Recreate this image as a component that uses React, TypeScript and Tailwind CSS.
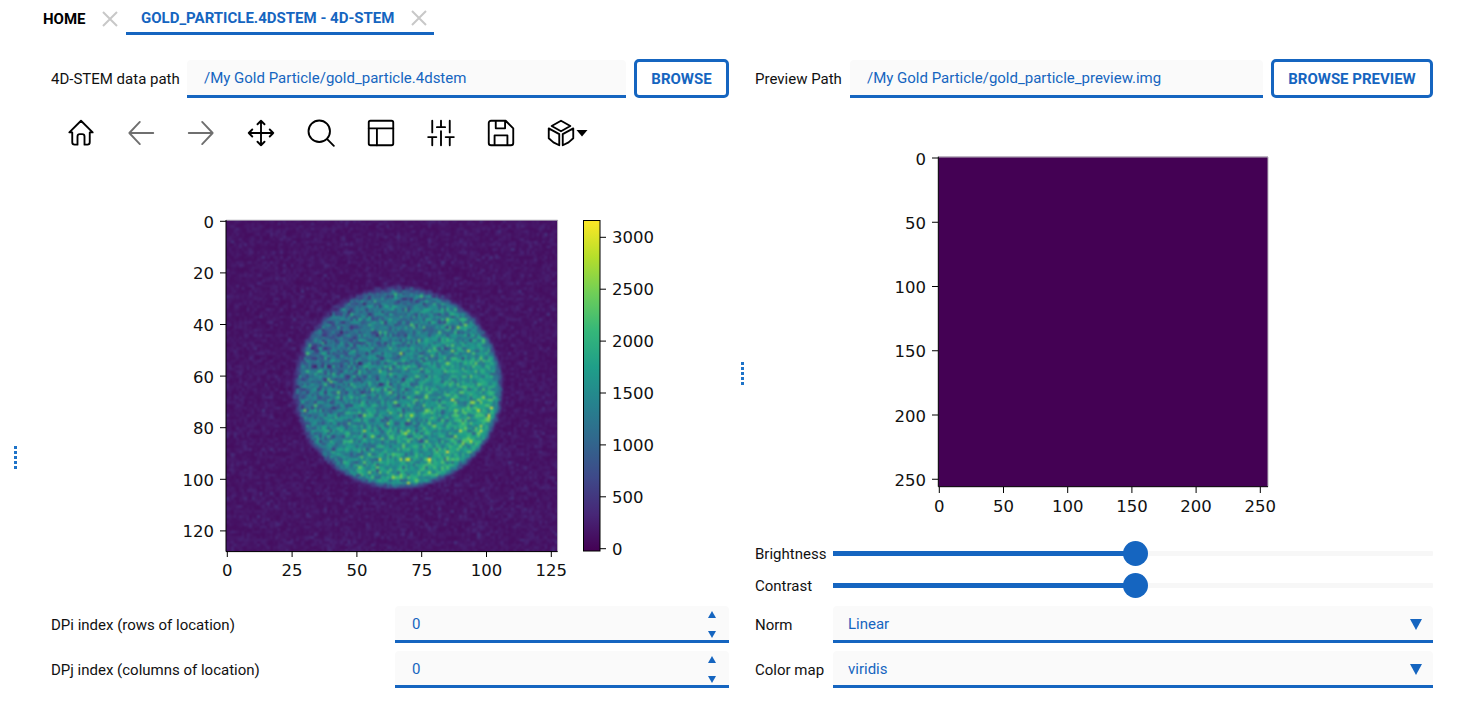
import React from "react";

const VIRIDIS = [
  [68, 1, 84], [71, 39, 119], [62, 73, 137], [49, 103, 141], [38, 130, 142],
  [31, 158, 137], [53, 183, 121], [110, 206, 88], [181, 222, 43], [253, 231, 37],
];

function viridis(t: number) {
  const c = Math.max(0, Math.min(0.9999, t)) * (VIRIDIS.length - 1);
  const i = Math.floor(c);
  const f = c - i;
  const a = VIRIDIS[i];
  const b = VIRIDIS[i + 1];
  return `rgb(${Math.round(a[0] + (b[0] - a[0]) * f)},${Math.round(a[1] + (b[1] - a[1]) * f)},${Math.round(a[2] + (b[2] - a[2]) * f)})`;
}

function makeHeat() {
  let s = 12345;
  const rnd = () => {
    s = (s * 1664525 + 1013904223) >>> 0;
    return s / 4294967296;
  };
  const gauss = () => (rnd() + rnd() + rnd() + rnd() - 2) * 1.73;
  const cells: { x: number; y: number; fill: string }[] = [];
  const cx = 65.9;
  const cy = 64.2;
  for (let y = 0; y < 128; y++) {
    for (let x = 0; x < 128; x++) {
      const dx = x - cx;
      const dy = (y - cy) * 1.03;
      const d = Math.sqrt(dx * dx + dy * dy);
      const edge = Math.max(0, Math.min(1, (39.3 - d) / 3 + 0.5));
      const grad = (dx * 0.8 + dy * 0.7) / 39;
      const mean = 1420 + 400 * grad;
      const spark = rnd() > 0.95 ? 350 + rnd() * (500 + 700 * Math.max(grad, 0)) : 0;
      const inside = mean + gauss() * 330 + spark;
      const outside = 100 + Math.abs(gauss()) * 100 + (rnd() > 0.96 ? 170 : 0);
      const v = inside * edge + outside * (1 - edge);
      cells.push({ x, y, fill: viridis(v / 3160) });
    }
  }
  return cells;
}

const HEAT = makeHeat();

const tick = "font-['DejaVu_Sans',sans-serif] text-[16.500px] fill-[#111111]";

function ParticlePlot() {
  const left = 226;
  const top = 220;
  const size = 331.6;
  const unit = size / 128;
  return (
    <svg viewBox="51 160 678 440" className="w-[678px] h-[440px] block">
      <defs>
        <linearGradient id="cb" x1="0" y1="1" x2="0" y2="0">
          {VIRIDIS.map((_, i) => (
            <stop key={i} offset={i / 9} stopColor={viridis(i / 9 + (i === 9 ? -0.0001 : 0))} />
          ))}
        </linearGradient>
        <filter id="soft" x="0" y="0" width="1" height="1" colorInterpolationFilters="sRGB">
          <feGaussianBlur stdDeviation="0.9" />
        </filter>
        <clipPath id="ax">
          <rect x={left} y={top} width={size} height={size} />
        </clipPath>
      </defs>
      <rect x={left} y={top} width={size} height={size} fill="#45116a" />
      <g clipPath="url(#ax)">
        <g filter="url(#soft)">
          {HEAT.map((c, i) => (
            <rect
              key={i}
              x={left + c.x * unit}
              y={top + c.y * unit}
              width={unit + 0.3}
              height={unit + 0.3}
              fill={c.fill}
              shapeRendering="crispEdges"
            />
          ))}
        </g>
      </g>
      <path d={`M${left} ${top + 0.2}H${left + size}V${top + size}`} fill="none" stroke="#b9b9bd" strokeWidth="1" />
      <path d={`M${left} ${top}V${top + size}H${left + size}`} fill="none" stroke="#000" strokeWidth="1" />
      {[0, 20, 40, 60, 80, 100, 120].map((v) => {
        const y = 221.3 + v * 2.58;
        return (
          <g key={v}>
            <line x1={220} x2={226} y1={y} y2={y} stroke="#000" />
            <text x={214} y={y + 6.5} textAnchor="end" className={tick}>{v}</text>
          </g>
        );
      })}
      {[0, 25, 50, 75, 100, 125].map((v) => {
        const x = 227.3 + v * 2.592;
        return (
          <g key={v}>
            <line x1={x} x2={x} y1={551} y2={557} stroke="#000" />
            <text x={x} y={576} textAnchor="middle" className={tick}>{v}</text>
          </g>
        );
      })}
      <rect x={583.5} y={220.5} width={16.5} height={330.5} fill="url(#cb)" stroke="#000" strokeWidth="1" />
      {[0, 500, 1000, 1500, 2000, 2500, 3000].map((v) => {
        const y = 548.7 - (v / 500) * 51.9;
        return (
          <g key={v}>
            <line x1={600} x2={606} y1={y} y2={y} stroke="#000" />
            <text x={612} y={y + 6} className={tick}>{v}</text>
          </g>
        );
      })}
    </svg>
  );
}

function PreviewPlot() {
  return (
    <svg viewBox="755 98 678 439" className="w-[678px] h-[439px] block">
      <rect x={938.3} y={156.7} width={329.7} height={330} fill="#440154" />
      <path d="M938.3 157H1268V486.7" fill="none" stroke="#b9b9bd" strokeWidth="1" />
      <path d="M938.3 156.7V486.7H1268" fill="none" stroke="#000" strokeWidth="1" />
      {[0, 50, 100, 150, 200, 250].map((v) => {
        const y = 158 + v * 1.285;
        return (
          <g key={v}>
            <line x1={932} x2={938} y1={y} y2={y} stroke="#000" />
            <text x={926} y={y + 6.5} textAnchor="end" className={tick}>{v}</text>
          </g>
        );
      })}
      {[0, 50, 100, 150, 200, 250].map((v) => {
        const x = 939.3 + v * 1.284;
        return (
          <g key={v}>
            <line x1={x} x2={x} y1={487} y2={493} stroke="#000" />
            <text x={x} y={512} textAnchor="middle" className={tick}>{v}</text>
          </g>
        );
      })}
    </svg>
  );
}

function Ico({ color = "#000", children }: { color?: string; children: React.ReactNode }) {
  return (
    <svg
      viewBox="0 0 24 24"
      className="w-[28px] h-[28px]"
      fill="none"
      stroke={color}
      strokeWidth="1.6"
      strokeLinecap="round"
      strokeLinejoin="round"
    >
      {children}
    </svg>
  );
}

function Toolbar() {
  const items = [
    <Ico key="h"><path d="M12 1.500 2 11.500h2.500v8.500a2 2 0 0 0 2 2h2.500v-7a2 2 0 0 1 2-2h2a2 2 0 0 1 2 2v7h2.500a2 2 0 0 0 2-2v-8.500h2.500z" /></Ico>,
    <Ico key="b" color="#6f6f6f"><path d="M22.500 12H2M2 12l9-9.500M2 12l9 9.500" /></Ico>,
    <Ico key="f" color="#6f6f6f"><path d="M1.500 12H22M22 12l-9-9.500M22 12l-9 9.500" /></Ico>,
    <Ico key="p"><path d="M1.500 12h21M12 1.500v21M4.500 9l-3 3 3 3M19.500 9l3 3-3 3M9 4.500l3-3 3 3M9 19.500l3 3 3-3" /></Ico>,
    <Ico key="z"><circle cx="10.500" cy="10.500" r="9.200" /><path d="m17.500 17.500 5.500 5.500" /></Ico>,
    <Ico key="l"><rect x="1.500" y="1.500" width="21" height="21" rx="1.500" /><path d="M1.500 8h21M8.500 8v14.500" /></Ico>,
    <Ico key="s"><path d="M4.500 1.500v10M4.500 16v6.500M12 1.500v5M12 10.500v12M19.500 1.500v10M19.500 16v6.500M1 15.500h7M8.500 7h7M16 15.500h7" /></Ico>,
    <Ico key="d"><path d="M3.500 1.500h12.500l6.500 6.500v12.500a2 2 0 0 1-2 2h-17a2 2 0 0 1-2-2v-17a2 2 0 0 1 2-2zM7.500 1.500v6.500h8v-6.500M6.500 22.500v-8.500h11v8.500" /></Ico>,
  ];
  return (
    <div className="flex items-center h-[62px] pt-[8px]">
      {items.map((it, i) => (
        <div key={i} className="w-[60px] flex justify-center items-center">{it}</div>
      ))}
      <div className="w-[60px] flex items-center pl-[16px]">
        <svg viewBox="0 0 24 24" className="w-[28px] h-[28px]" fill="none" stroke="#000" strokeWidth="1.600" strokeLinejoin="round" strokeLinecap="round">
          <path d="M12 1.500 20 6 12 10.500 4 6zM1.500 8 10.500 13v9.500l-5-2.500-4-3.500zM22.500 8l-9 5v9.500l5-2.500 4-3.500z" />
        </svg>
        <svg viewBox="0 0 12 8" className="w-[12px] h-[8px] ml-[1px]">
          <path d="M0.500 1h11L6 7.500z" fill="#000" />
        </svg>
      </div>
    </div>
  );
}

function Field({ value, className }: { value: string; className: string }) {
  return (
    <div className={`h-[38px] bg-[#fafafa] border-b-[3px] border-[#1565c0] rounded-t-[4px] pt-[2px] flex items-center text-[#1565c0] ${className}`}>
      {value}
    </div>
  );
}

function OutlineButton({ label, className }: { label: string; className: string }) {
  return (
    <button className={`h-[39px] border-[3px] border-[#1565c0] rounded-[5px] bg-white text-[#1565c0] font-bold flex items-center justify-center ${className}`}>
      {label}
    </button>
  );
}

function Spin({ className }: { className: string }) {
  return <span className={`w-0 h-0 border-x-[4.500px] border-x-transparent ${className}`} />;
}

function NumberRow({ label, value }: { label: string; value: string }) {
  return (
    <div className="flex items-center h-[37px]">
      <div className="w-[344px] pt-[1px]">{label}</div>
      <div className="w-[334px] h-[37px] bg-[#fafafa] border-b-[3px] border-[#1565c0] rounded-t-[4px] pt-[2px] flex items-center justify-between pl-[17px] pr-[13px] text-[#1565c0]">
        <span>{value}</span>
        <span className="flex flex-col justify-between h-[27px]">
          <Spin className="border-b-[7px] border-b-[#1565c0]" />
          <Spin className="border-t-[7px] border-t-[#1565c0]" />
        </span>
      </div>
    </div>
  );
}

function SliderRow({ label }: { label: string }) {
  return (
    <div className="flex items-center h-[32px]">
      <div className="w-[78px] pt-[1px]">{label}</div>
      <div className="relative w-[600px] h-[5px] bg-[#f7f7f7] rounded-[1px]">
        <div className="h-[5px] w-[302px] bg-[#1565c0]" />
        <div className="absolute left-[290px] -top-[10px] w-[25px] h-[25px] rounded-full bg-[#1565c0]" />
      </div>
    </div>
  );
}

function SelectRow({ label, value }: { label: string; value: string }) {
  return (
    <div className="flex items-center h-[37px]">
      <div className="w-[78px] pt-[1px]">{label}</div>
      <div className="w-[600px] h-[37px] bg-[#fafafa] border-b-[3px] border-[#1565c0] rounded-t-[4px] pt-[2px] flex items-center justify-between pl-[15px] pr-[11px] text-[#1565c0]">
        <span>{value}</span>
        <span className="w-0 h-0 border-x-[6px] border-x-transparent border-t-[11px] border-t-[#1565c0]" />
      </div>
    </div>
  );
}

function Handle() {
  return (
    <div className="flex flex-col gap-[2px] items-center">
      {Array.from({ length: 5 }).map((_, i) => (
        <span key={i} className="w-[3px] h-[3px] bg-[#1e73c8]" />
      ))}
    </div>
  );
}

function CloseX() {
  return (
    <svg viewBox="0 0 16 16" className="w-[16px] h-[16px]" stroke="#c8c8c8" strokeWidth="2" fill="none">
      <path d="M1 1l14 14M15 1 1 15" />
    </svg>
  );
}

export default function App() {
  return (
    <div className="w-[1459px] h-[703px] overflow-hidden bg-white text-[15px] leading-[20px] text-[#111] font-['Roboto',sans-serif] flex flex-col">
      <div className="flex h-[35px] pl-[43px] font-bold">
        <div className="flex items-center h-[35px] pt-[3px] w-[83px] gap-[16px]">
          <span className="text-black">HOME</span>
          <CloseX />
        </div>
        <div className="flex items-center h-[35px] pt-[3px] w-[308px] pl-[15px] gap-[17px] border-b-[3px] border-[#1565c0] text-[#1565c0]">
          <span>GOLD_PARTICLE.4DSTEM - 4D-STEM</span>
          <CloseX />
        </div>
      </div>
      <div className="flex flex-1 pt-[24px]">
        <div className="w-[51px] flex justify-start pl-[14px] pt-[387px]">
          <Handle />
        </div>
        <div className="w-[678px] flex flex-col">
          <div className="flex items-center h-[39px]">
            <div className="w-[136px] pt-[1px]">4D-STEM data path</div>
            <Field value="/My Gold Particle/gold_particle.4dstem" className="w-[439px] pl-[17px]" />
            <OutlineButton label="BROWSE" className="ml-[8px] w-[95px]" />
          </div>
          <Toolbar />
          <ParticlePlot />
          <div className="flex flex-col gap-[8px] mt-[6px]">
            <NumberRow label="DPi index (rows of location)" value="0" />
            <NumberRow label="DPj index (columns of location)" value="0" />
          </div>
        </div>
        <div className="w-[26px] flex justify-center pt-[303px]">
          <Handle />
        </div>
        <div className="w-[678px] flex flex-col">
          <div className="flex items-center h-[39px]">
            <div className="w-[95px] pt-[1px]">Preview Path</div>
            <Field value="/My Gold Particle/gold_particle_preview.img" className="w-[413px] pl-[17px]" />
            <OutlineButton label="BROWSE PREVIEW" className="ml-[8px] w-[162px]" />
          </div>
          <PreviewPlot />
          <SliderRow label="Brightness" />
          <SliderRow label="Contrast" />
          <div className="flex flex-col gap-[8px] mt-[5px]">
            <SelectRow label="Norm" value="Linear" />
            <SelectRow label="Color map" value="viridis" />
          </div>
        </div>
      </div>
    </div>
  );
}
